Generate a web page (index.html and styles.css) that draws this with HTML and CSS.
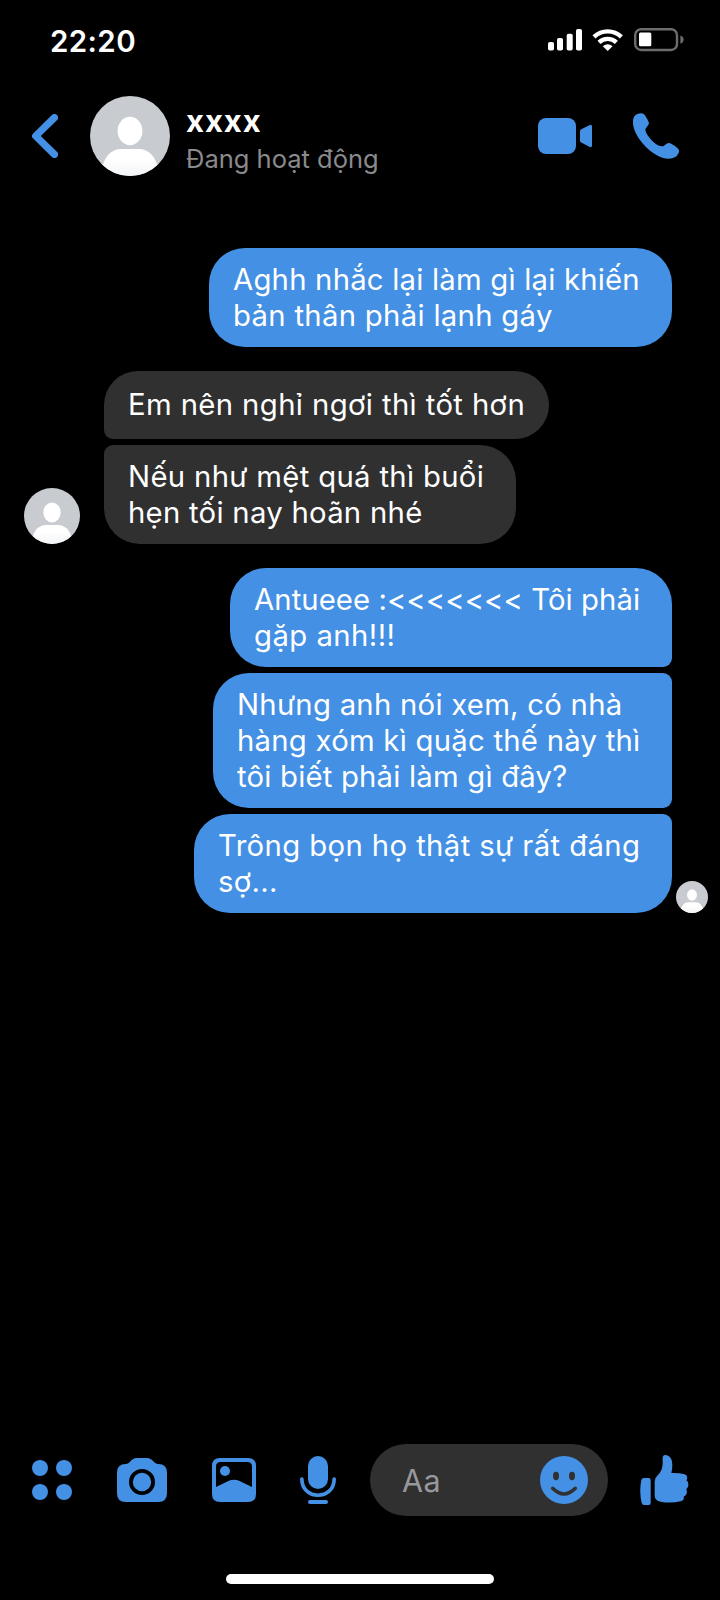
FILE: index.html
```html
<!DOCTYPE html>
<html lang="vi">
<head>
<meta charset="utf-8">
<title>xxxx</title>
<link rel="stylesheet" href="styles.css">
</head>
<body>
<svg width="0" height="0" class="defs" aria-hidden="true">
  <defs>
    <linearGradient id="torso" x1="0" y1="0" x2="0" y2="1"><stop offset=".35" stop-color="#fff"/><stop offset="1" stop-color="#f3f4f6"/></linearGradient>
    <clipPath id="disc"><circle cx="40" cy="40" r="40"/></clipPath>
    <symbol id="person" viewBox="0 0 80 80">
      <circle cx="40" cy="40" r="40" fill="#c8cbd0"/>
      <ellipse cx="40" cy="35" rx="12.4" ry="14.2" fill="#fff"/>
      <path clip-path="url(#disc)" d="M12.500 80V70C15 60 22 53 31 53H49C58 53 65 60 67.500 70V80Z" fill="url(#torso)"/>
    </symbol>
  </defs>
</svg>
<main class="screen">
  <div class="status">
    <span class="clock">22:20</span>
    <svg class="signal" width="34" height="22" viewBox="0 0 34 22"><rect y="13" width="6" height="8.5" rx="1.8"/><rect x="9" y="9" width="6" height="12.5" rx="1.8"/><rect x="18.7" y="4.7" width="6" height="16.8" rx="1.8"/><rect x="28" width="6" height="21.5" rx="1.8"/></svg>
    <svg class="wifi" width="32" height="22" viewBox="0 0 32 22"><path d="M2 7.8A20 20 0 0 1 29.400 7.800M7 13.300A12.800 12.800 0 0 1 24.400 13.300" fill="none" stroke="#fff" stroke-width="4.4"/><path d="M10.800 17.200Q15.700 13.200 20.600 17.200L15.700 22Z"/></svg>
    <svg class="battery" width="50" height="24" viewBox="0 0 50 24"><rect x="1.2" y="1.2" width="41.8" height="20.8" rx="6" fill="none" stroke="#6c6c6c" stroke-width="2.4"/><rect x="5" y="4.6" width="12.3" height="13.6" rx="1.5"/><path d="M46.4 7.4Q49.6 8.4 49.6 11.6T46.4 15.8Z" fill="#6c6c6c"/></svg>
  </div>
  <header class="header">
    <svg class="back" width="26" height="44" viewBox="0 0 26 44"><path d="M22.400 3.600L3.700 22L22.400 40.400" fill="none" stroke="#4390e4" stroke-width="7.200" stroke-linecap="round" stroke-linejoin="round"/></svg>
    <svg class="avatar" width="80" height="80"><use href="#person"/></svg>
    <div class="who"><div class="name">xxxx</div><div class="presence">Đang hoạt động</div></div>
    <svg class="video" width="54" height="36" viewBox="0 0 54 36"><rect width="38" height="36" rx="8"/><path d="M42 13.5Q42 12 43.3 11.2L51.8 7Q54 6.2 54 8.4V27.6Q54 29.8 51.8 29L43.3 24.6Q42 23.8 42 22.5Z"/></svg>
    <svg class="phone" width="46" height="46" viewBox="399 339 138 138"><path d="M403 349C409 341 422 337 430 341C435 344 446 363 447 369C447 375 437 383 436 389C437 402 456 424 469 433C478 439 486 440 491 438C496 435 500 429 507 429C514 430 533 442 537 450C538 457 534 464 529 469C519 478 502 478 487 473C447 459 407 414 400 378C398 367 398 357 403 349Z"/></svg>
  </header>
  <section class="thread">
    <div class="group sent">
      <p class="bubble w1"><span class="l1">Aghh nhắc lại làm gì lại khiến</span><br><span class="l2">bản thân phải lạnh gáy</span></p>
    </div>
    <div class="group received">
      <svg class="peer" width="56" height="56"><use href="#person"/></svg>
      <div class="stack">
        <p class="bubble single first w2"><span class="l3">Em nên nghỉ ngơi thì tốt hơn</span></p>
        <p class="bubble last w3"><span class="l4">Nếu như mệt quá thì buổi</span><br><span class="l5">hẹn tối nay hoãn nhé</span></p>
      </div>
    </div>
    <div class="group sent">
      <div class="stack">
        <p class="bubble first w4"><span class="l6">Antueee :&lt;&lt;&lt;&lt;&lt;&lt;&lt; Tôi phải</span><br><span class="l7">gặp anh!!!</span></p>
        <p class="bubble first last w5"><span class="l8">Nhưng anh nói xem, có nhà</span><br><span class="l9">hàng xóm kì quặc thế này thì</span><br><span class="l10">tôi biết phải làm gì đây?</span></p>
        <p class="bubble last w6"><span class="l11">Trông bọn họ thật sự rất đáng</span><br><span class="l12">sợ...</span></p>
      </div>
      <svg class="seen" width="32" height="32"><use href="#person"/></svg>
    </div>
  </section>
  <footer class="composer">
    <svg class="apps" width="40" height="40" viewBox="0 0 40 40"><circle cx="8" cy="8" r="8"/><circle cx="32" cy="8" r="8"/><circle cx="8" cy="32" r="8"/><circle cx="32" cy="32" r="8"/></svg>
    <svg class="camera" width="50" height="44" viewBox="351 84 150 132"><path fill-rule="evenodd" d="M377 102C391 101 394 84 410 84H441C457 84 461 101 475 102Q501 102 501 128V190Q501 216 475 216H377Q351 216 351 190V128Q351 102 377 102ZM426 117A39 39 0 1 0 426 195A39 39 0 1 0 426 117Z"/><circle cx="426" cy="156" r="27.5"/></svg>
    <svg class="gallery" width="44" height="44" viewBox="636 84 132 132"><path fill-rule="evenodd" d="M660 84H744Q768 84 768 108V192Q768 216 744 216H660Q636 216 636 192V108Q636 84 660 84ZM662 96Q648 96 648 110V171Q667 162 685 153Q702 146 719 153Q737 162 756 171V110Q756 96 742 96Z"/><circle cx="675" cy="123" r="15"/></svg>
    <svg class="mic" width="36" height="48" viewBox="900 78 108 144"><rect x="924" y="78" width="60" height="99" rx="30"/><path d="M905.500 147C905.500 212 1002.500 212 1002.500 147" fill="none" stroke="#4390e4" stroke-width="11" stroke-linecap="round"/><rect x="924" y="210" width="60" height="12" rx="6"/></svg>
    <div class="input"><span class="hint">Aa</span>
      <svg class="smile" width="48" height="48" viewBox="540 78 144 144"><circle cx="612" cy="150" r="72"/><g fill="#303030"><ellipse cx="588" cy="138" rx="9" ry="12.500"/><ellipse cx="636" cy="138" rx="9" ry="12.500"/></g><path d="M578 175Q612 209 646 175" fill="none" stroke="#303030" stroke-width="10.500" stroke-linecap="round"/></svg>
    </div>
    <svg class="like" width="49" height="50" viewBox="839 75 147 150"><path d="M850 144H865Q871 144 871 150V218Q871 225 865 225H851Q846 225 844 219Q836 184 843 150Q845 144 850 144Z"/><path d="M908 79Q911 73 920 76Q936 82 936 104Q936 117 933 129Q955 128 973 133Q983 137 980 148L978 151Q985 155 984 166Q984 173 978 178Q982 187 977 195L970 200Q973 210 961 214Q931 221 901 215Q883 211 883 197V154Q883 144 892 136Q909 120 907 93Q906 84 908 79Z"/></svg>
  </footer>
  <div class="home"></div>
</main>
</body>
</html>
```

FILE: styles.css
```css
* { box-sizing: border-box; }
body { margin: 0; background: #000; font-family: Inter, "Noto Sans", sans-serif; color: #fff; }
.defs { position: absolute; }
svg { display: block; flex: none; fill: #4390e4; }
.screen { width: 720px; height: 1600px; display: flex; flex-direction: column; overflow: hidden; }

.status { height: 96px; display: flex; align-items: flex-start; padding: 27px 36px 0 50px; }
.status svg { fill: #fff; }
.clock { flex: 1; font-size: 29.5px; line-height: 28px; font-weight: 600; letter-spacing: .4px; }
.signal { margin-top: 2px; }
.wifi { margin: 2px 10px 0; }
.battery { margin-top: 1px; }

.header { height: 80px; display: flex; align-items: center; padding: 0 41px 0 32px; }
.avatar { margin: 0 16px 0 32px; }
.who { flex: 1; white-space: nowrap; }
.name { font-size: 31px; line-height: 38px; font-weight: 700; letter-spacing: .9px; margin-top: 6px; }
.presence { font-size: 25.5px; line-height: 37px; color: #8a8a8c; }
.phone { margin-left: 41px; }

.thread { flex: 1; padding-top: 72px; display: flex; flex-direction: column; gap: 24px; }
.group { display: flex; align-items: flex-end; }
.sent { justify-content: flex-end; padding-right: 48px; }
.received { padding-left: 24px; gap: 24px; }
.stack { display: flex; flex-direction: column; gap: 6px; }
.sent .stack { align-items: flex-end; }
.received .stack { align-items: flex-start; }
.bubble { margin: 0; padding: 14px 0 13px 24px; border-radius: 36px; font-size: 29.3px; line-height: 36px; white-space: nowrap; }
.single { padding: 16px 0 16px 24px; border-radius: 34px; }
.sent .bubble { background: #4390e4; }
.received .bubble { background: #303030; }
.sent .first { border-bottom-right-radius: 9px; }
.sent .last { border-top-right-radius: 9px; }
.sent .first.last { border-radius: 36px 9px 9px 36px; }
.received .first { border-bottom-left-radius: 9px; }
.received .last { border-top-left-radius: 9px; }
.w1 { width: 463px; }
.w2 { width: 445px; }
.w3 { width: 412px; }
.w4 { width: 442px; }
.w5 { width: 459px; }
.w6 { width: 478px; }
.l1 { letter-spacing: .21px; }
.l2 { letter-spacing: .3px; }
.l3 { letter-spacing: .38px; }
.l4 { letter-spacing: .32px; }
.l5 { letter-spacing: .27px; }
.l6 { letter-spacing: .06px; }
.l7 { letter-spacing: .45px; }
.l8 { letter-spacing: .26px; }
.l9 { letter-spacing: .25px; }
.l10 { letter-spacing: .2px; }
.l11 { letter-spacing: .39px; }
.l12 { letter-spacing: .3px; }
.seen { margin: 0 -36px 0 4px; }

.composer { height: 72px; margin-bottom: 58px; display: flex; align-items: center; padding: 0 31px 0 32px; }
.camera { margin-left: 45px; }
.gallery { margin-left: 45px; }
.mic { margin-left: 44px; }
.input { margin: 0 32px 0 34px; width: 238px; height: 72px; border-radius: 36px; background: #303030; display: flex; align-items: center; justify-content: space-between; padding: 0 20px 0 32px; }
.hint { font-size: 30.5px; line-height: 36px; color: #98989d; margin-top: 2px; letter-spacing: .5px; }
.home { width: 268px; height: 10px; border-radius: 5px; background: #fff; margin: 0 auto 16px; }
```
